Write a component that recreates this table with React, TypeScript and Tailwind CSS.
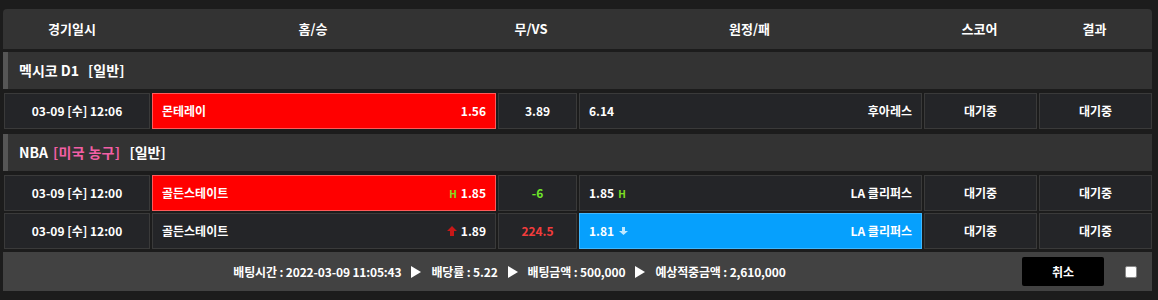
import React from "react";

const FONT = "font-['Noto_Sans_CJK_KR','Noto_Sans',sans-serif]";

function UpArrow() {
  return (
    <svg width="10" height="10" viewBox="0 0 10 10" className="mr-[4px]">
      <polygon points="5,0 10,5 7,5 7,10 3,10 3,5 0,5" fill="#c81818" />
    </svg>
  );
}

function DownArrow() {
  return (
    <svg width="9" height="8" viewBox="0 0 9 8" className="ml-[5px]">
      <polygon points="3,0 6,0 6,4 9,4 4.5,8 0,4 3,4" fill="#bfe9ff" />
    </svg>
  );
}

function H({ className }: { className?: string }) {
  return <span className={`text-[10px] font-bold text-[#7ee021] ${className ?? ""}`}>H</span>;
}

function Tri() {
  return (
    <svg width="10" height="12" viewBox="0 0 10 12" className="mx-[10px]">
      <polygon points="0,0 10,6 0,12" fill="#ffffff" />
    </svg>
  );
}

const cell = "h-[36px] border border-[#3a3a3a] bg-[#242528] flex items-center text-[12px] font-bold text-white";
const redCell = "h-[36px] border border-[#ff5a5a] bg-[#ff0000] flex items-center text-[12px] font-bold text-white";
const blueCell = "h-[36px] border border-[#3fb8ff] bg-[#06a0fd] flex items-center text-[12px] font-bold text-white";

type RowProps = {
  date: string;
  home: string;
  homeOdds: React.ReactNode;
  homeSel?: boolean;
  vs: React.ReactNode;
  away: string;
  awayOdds: React.ReactNode;
  awaySel?: boolean;
};

function Row(p: RowProps) {
  return (
    <div className="grid grid-cols-[146px_344px_79px_343px_113px_113px] gap-x-[2px] ml-[1px]">
      <div className={`${cell} justify-center`}>{p.date}</div>
      <div className={`${p.homeSel ? redCell : cell} justify-between px-[9px]`}>
        <span>{p.home}</span>
        <span className="flex items-center">{p.homeOdds}</span>
      </div>
      <div className={`${cell} justify-center`}>{p.vs}</div>
      <div className={`${p.awaySel ? blueCell : cell} justify-between px-[9px]`}>
        <span className="flex items-center">{p.awayOdds}</span>
        <span>{p.away}</span>
      </div>
      <div className={`${cell} justify-center`}>대기중</div>
      <div className={`${cell} justify-center`}>대기중</div>
    </div>
  );
}

function League({ children }: { children: React.ReactNode }) {
  return (
    <div className="h-[37px] bg-[#333333] border-l-[5px] border-[#565656] flex items-center pl-[11px] text-[14px] font-bold text-white">
      {children}
    </div>
  );
}

export default function App() {
  return (
    <div className={`w-[1158px] h-[300px] bg-[#1c1c1c] pl-[3px] pr-[6px] pt-[9px] ${FONT}`}>
      <div className="grid grid-cols-[138px_344px_92px_345px_115px_115px] h-[40px] bg-[#333333] rounded-t-[4px] text-[13px] font-bold text-white items-center text-center">
        <div>경기일시</div>
        <div>홈/승</div>
        <div>무/VS</div>
        <div>원정/패</div>
        <div>스코어</div>
        <div>결과</div>
      </div>

      <div className="mt-[3px]">
        <League>
          <span>멕시코 D1</span>
          <span className="ml-[9px]">[일반]</span>
        </League>
      </div>
      <div className="mt-[4px]">
        <Row
          date="03-09 [수] 12:06"
          home="몬테레이"
          homeOdds="1.56"
          homeSel
          vs="3.89"
          away="후아레스"
          awayOdds="6.14"
        />
      </div>

      <div className="mt-[5px]">
        <League>
          <span>NBA</span>
          <span className="ml-[5px] text-[#f25fa4] tracking-[0.3px]">[미국 농구]</span>
          <span className="ml-[9px]">[일반]</span>
        </League>
      </div>
      <div className="mt-[4px] flex flex-col gap-y-[2px]">
        <Row
          date="03-09 [수] 12:00"
          home="골든스테이트"
          homeOdds={
            <>
              <H className="mr-[4px]" />
              1.85
            </>
          }
          homeSel
          vs={<span className="text-[#6fe52b]">-6</span>}
          away="LA 클리퍼스"
          awayOdds={
            <>
              1.85
              <H className="ml-[4px]" />
            </>
          }
        />
        <Row
          date="03-09 [수] 12:00"
          home="골든스테이트"
          homeOdds={
            <>
              <UpArrow />
              1.89
            </>
          }
          vs={<span className="text-[#f23c3c]">224.5</span>}
          away="LA 클리퍼스"
          awayOdds={
            <>
              1.81
              <DownArrow />
            </>
          }
          awaySel
        />
      </div>

      <div className="mt-[3px] h-[39px] bg-[#424242] flex items-center text-[12px] font-bold text-white">
        <div className="flex-1 flex items-center justify-center tracking-[-0.15px]">
          <span>배팅시간 : 2022-03-09 11:05:43</span>
          <Tri />
          <span>배당률 : 5.22</span>
          <Tri />
          <span>배팅금액 : 500,000</span>
          <Tri />
          <span>예상적중금액 : 2,610,000</span>
        </div>
        <button className="w-[82px] h-[29px] bg-black rounded-[2px] text-white text-[12px] font-bold ml-[6px]">취소</button>
        <div className="w-[12px] h-[12px] bg-white rounded-[2px] border border-[#888] ml-[21px] mr-[15px]" />
      </div>
    </div>
  );
}
